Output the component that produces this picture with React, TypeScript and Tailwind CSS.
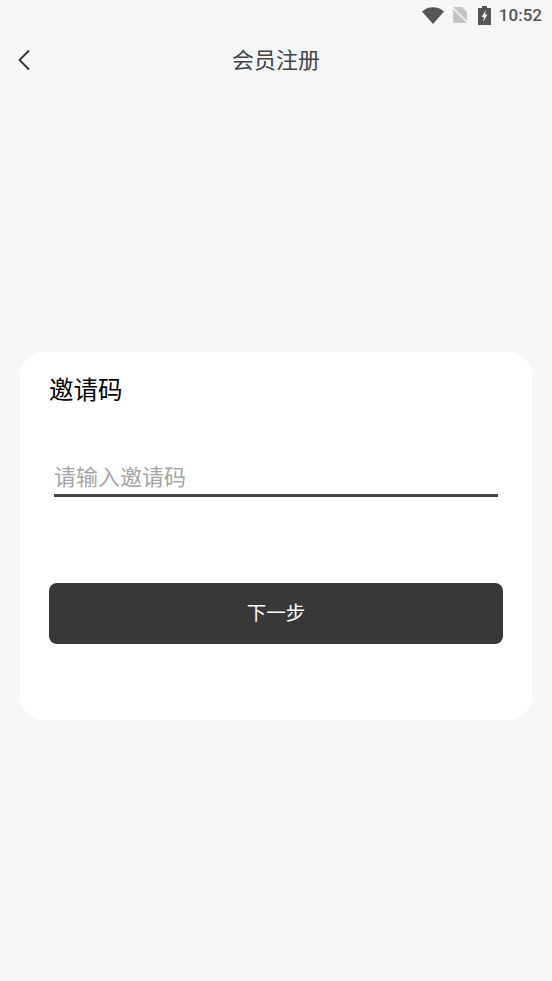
export default function App() {
  return (
    <div className="w-[552px] h-[981px] bg-[#f5f6f8] flex flex-col overflow-hidden font-['Roboto','Noto_Sans_CJK_SC',sans-serif]">
      <div className="h-[30px] flex items-center justify-end pr-[10px] shrink-0">
        <svg width="22" height="17" viewBox="0 0 22 17" className="mr-[8px]"><path d="M0 4.5C3 1.6 6.8.2 11 .2S19 1.6 22 4.5L11 17z" fill="#555" /></svg>
        <svg width="16" height="18" viewBox="0 0 16 18" className="mr-[10px]"><path d="M1 1h9l5 5v11H1z" fill="#c4c4c4" /><path d="M0 1l16 16" stroke="#f5f6f8" strokeWidth="1.3" /></svg>
        <svg width="13" height="19" viewBox="0 0 13 19" className="mr-[8px]"><path d="M4 0h5v2h4v17H0V2h4z" fill="#555" /><path d="M8 4L3.5 11h2.5l-1 5L9.5 8.5H7z" fill="#f5f6f8" /></svg>
        <span className="text-[17px] font-medium text-[#555] leading-none">10:52</span>
      </div>
      <div className="h-[60px] flex items-center relative shrink-0">
        <svg width="14" height="24" viewBox="0 0 14 24" className="absolute left-[17px] top-[18px]" fill="none"><path d="M12 2.5L2.5 12 12 21.5" stroke="#333" strokeWidth="1.8" /></svg>
        <span className="w-full text-center text-[22px] text-[#444] leading-none pt-[2px]">会员注册</span>
      </div>
      <div className="h-[262px] shrink-0" />
      <div className="mx-[20px] h-[368px] bg-white rounded-[24px] px-[29px] flex flex-col">
        <div className="text-[24.5px] leading-none text-black mt-[27px]">邀请码</div>
        <div className="mt-[59px] mx-[5px] h-[34px] border-b-[3px] border-[#444] text-[22px] text-[#a4a4a4] leading-none flex items-center">请输入邀请码</div>
        <button className="mt-[86px] h-[61px] pt-[1px] rounded-[8px] bg-[#383838] text-white text-[19.5px]">下一步</button>
      </div>
    </div>
  );
}
